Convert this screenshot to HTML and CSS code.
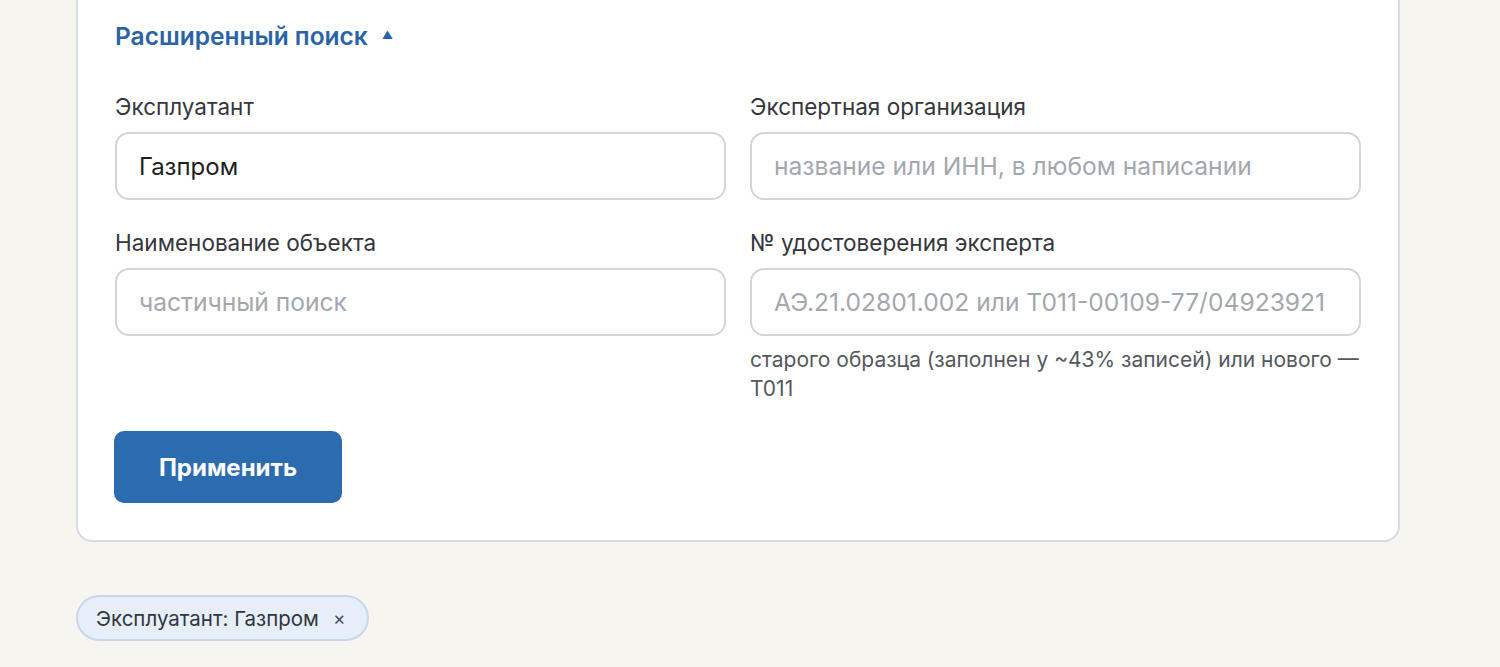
FILE: index.html
```html
<!DOCTYPE html>
<html lang="ru">
<head>
<meta charset="utf-8">
<title>Расширенный поиск</title>
<link rel="stylesheet" href="styles.css">
</head>
<body>
<div class="page">
  <section class="card">
    <button class="toggle" type="button">Расширенный поиск <span class="caret">▲</span></button>
    <form class="grid">
      <div class="field">
        <label class="label">Эксплуатант</label>
        <input class="input" type="text" value="Газпром">
      </div>
      <div class="field">
        <label class="label">Экспертная организация</label>
        <input class="input" type="text" placeholder="название или ИНН, в любом написании">
      </div>
      <div class="field">
        <label class="label">Наименование объекта</label>
        <input class="input" type="text" placeholder="частичный поиск">
      </div>
      <div class="field">
        <label class="label">№ удостоверения эксперта</label>
        <input class="input" type="text" placeholder="АЭ.21.02801.002 или Т011-00109-77/04923921">
        <p class="hint">старого образца (заполнен у ~43% записей) или нового — Т011</p>
      </div>
    </form>
    <button class="apply" type="button">Применить</button>
  </section>
  <div class="chips">
    <span class="chip">Эксплуатант: Газпром <span class="chip-x">×</span></span>
  </div>
</div>
</body>
</html>
```

FILE: styles.css
```css
* { box-sizing: border-box; }
html, body { margin: 0; padding: 0; }
body {
  background: #f6f5f0;
  font-family: Inter, "Noto Sans", sans-serif;
  color: #2d3035;
}
.page {
  padding: 0 100px 0 76px;
}
.card {
  width: 1324px;
  background: #fff;
  border: 2px solid #d3dce8;
  border-top: 0;
  border-radius: 0 0 16px 16px;
  padding: 21px 37px 37px 37px;
}
.toggle {
  display: flex;
  align-items: center;
  gap: 14px;
  background: none;
  border: 0;
  padding: 0;
  font-family: inherit;
  font-size: 24.5px;
  line-height: 30px;
  font-weight: 600;
  color: #2a64a8;
  cursor: pointer;
}
.caret {
  font-size: 11px;
  line-height: 30px;
  position: relative;
  top: -1px;
}
.grid {
  margin-top: 43px;
  display: grid;
  grid-template-columns: 1fr 1fr;
  column-gap: 24px;
  row-gap: 30px;
}
.field {
  display: flex;
  flex-direction: column;
}
.label {
  font-size: 22.5px;
  line-height: 26px;
  color: #34373c;
  margin-bottom: 12px;
}
.input {
  height: 68px;
  border: 2px solid #d2d5db;
  border-radius: 14px;
  padding: 0 22px;
  font-family: inherit;
  font-size: 24px;
  color: #1c1e21;
  background: #fff;
  outline: none;
}
.input::placeholder { color: #a3a7ae; font-size: 24.6px; }
.hint {
  margin: 9px 0 0;
  font-size: 21px;
  line-height: 29px;
  color: #54585e;
}
.apply {
  margin-top: 28px;
  width: 228px;
  height: 72px;
  border: 0;
  border-radius: 10px;
  background: #2b6cb0;
  color: #fff;
  font-family: inherit;
  font-size: 24px;
  font-weight: 700;
  cursor: pointer;
  display: block;
  margin-left: -1px;
}
.chips {
  margin-top: 53px;
  display: flex;
}
.chip {
  display: inline-flex;
  align-items: center;
  gap: 14px;
  height: 46px;
  padding: 0 22px 0 18px;
  border: 2px solid #c9d6ea;
  border-radius: 23px;
  background: #e6eef9;
  font-size: 20.5px;
  color: #33363b;
}
.chip-x { font-size: 19px; color: #4a4e55; }
```
